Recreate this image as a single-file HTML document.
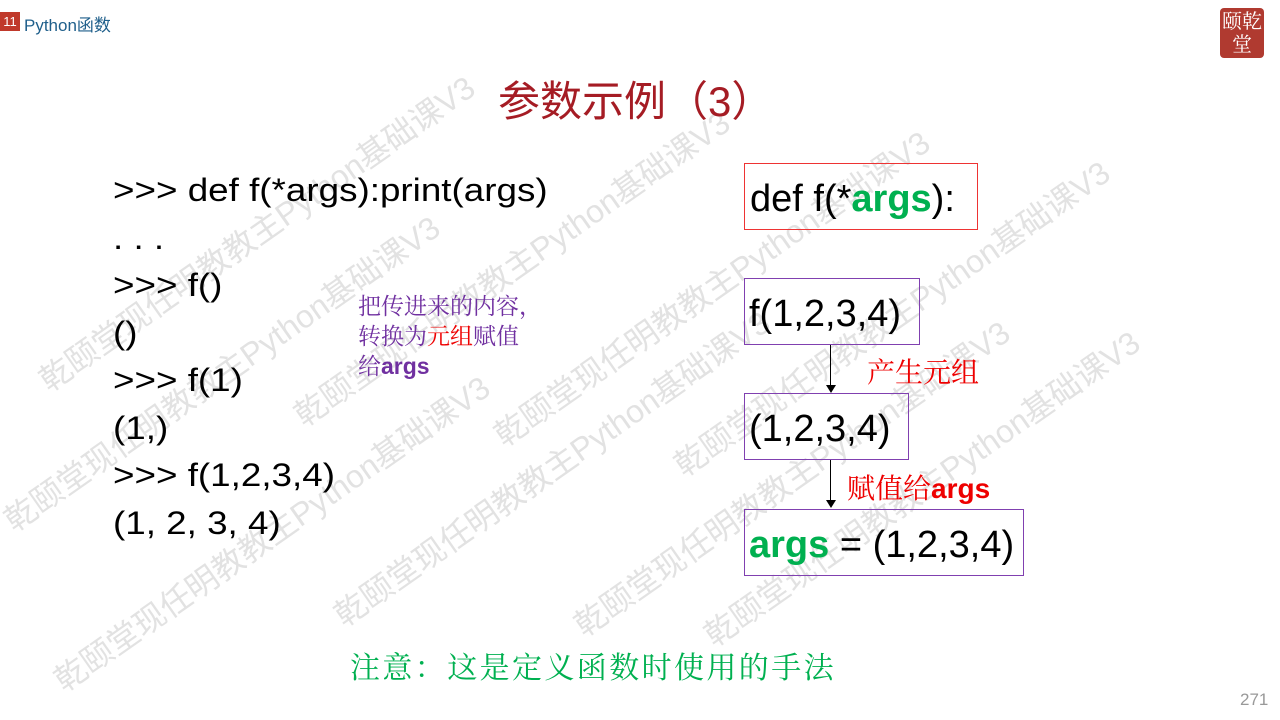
<!DOCTYPE html>
<html><head><meta charset="utf-8"><style>
body{margin:0;width:1280px;height:720px;background:#fff;position:relative;overflow:hidden;font-family:"Liberation Sans","Noto Sans CJK SC",sans-serif}
.a{position:absolute;white-space:nowrap}
.wm{position:absolute;white-space:nowrap;font-size:32px;color:rgba(190,190,190,0.45);transform-origin:0 100%;transform:rotate(-35deg);font-family:"Liberation Sans","Noto Sans CJK SC",sans-serif}
.code{font-size:32px;color:#000;line-height:47.5px;transform-origin:0 0;transform:scaleX(1.15)}
.box{position:absolute;box-sizing:border-box;font-size:38px;white-space:nowrap;line-height:1}
.g{color:#00b050;font-weight:bold}
</style></head><body>
<div class="wm" style="left:55px;top:355px">乾颐堂现任明教教主Python基础课V3</div>
<div class="wm" style="left:20px;top:495px">乾颐堂现任明教教主Python基础课V3</div>
<div class="wm" style="left:70px;top:655px">乾颐堂现任明教教主Python基础课V3</div>
<div class="wm" style="left:310px;top:390px">乾颐堂现任明教教主Python基础课V3</div>
<div class="wm" style="left:350px;top:590px">乾颐堂现任明教教主Python基础课V3</div>
<div class="wm" style="left:510px;top:410px">乾颐堂现任明教教主Python基础课V3</div>
<div class="wm" style="left:590px;top:600px">乾颐堂现任明教教主Python基础课V3</div>
<div class="wm" style="left:690px;top:440px">乾颐堂现任明教教主Python基础课V3</div>
<div class="wm" style="left:720px;top:610px">乾颐堂现任明教教主Python基础课V3</div>

<div class="a" style="left:0;top:12px;width:20px;height:19px;background:#c0392b;color:#fff;font-size:13px;text-align:center;line-height:19px">11</div>
<div class="a" style="left:24px;top:11px;font-size:17px;color:#1f5f8b">Python函数</div>
<div class="a" style="left:1220px;top:8px;width:44px;height:50px;background:#b03a30;border-radius:4px;color:#fff;font-size:20px;line-height:23px;text-align:center;font-family:'Noto Serif CJK SC',serif">颐乾<br>堂</div>

<div class="a" style="left:498px;top:68px;font-size:42px;color:#a51c24">参数示例（3）</div>

<div class="a code" style="left:113px;top:167px">&gt;&gt;&gt; def f(*args):print(args)<br>. . .<br>&gt;&gt;&gt; f()<br>()<br>&gt;&gt;&gt; f(1)<br>(1,)<br>&gt;&gt;&gt; f(1,2,3,4)<br>(1, 2, 3, 4)</div>

<div class="a" style="left:358px;top:290px;font-size:23px;line-height:30px;color:#7030a0;font-family:'Noto Serif CJK SC',serif">把传进来的内容，<br>转换为<span style="color:#e00">元组</span>赋值<br>给<b style="font-family:'Liberation Sans'">args</b></div>

<div class="box" style="left:744px;top:163px;width:234px;height:67px;border:1px solid #e33;padding:16px 0 0 5px">def f(*<span class="g">args</span>):</div>
<div class="box" style="left:744px;top:278px;width:176px;height:67px;border:1px solid #8040b0;padding:16px 0 0 4px">f(1,2,3,4)</div>
<div class="box" style="left:744px;top:393px;width:165px;height:67px;border:1px solid #8040b0;padding:16px 0 0 4px">(1,2,3,4)</div>
<div class="box" style="left:744px;top:509px;width:280px;height:67px;border:1px solid #8040b0;padding:16px 0 0 4px"><span class="g">args</span> = (1,2,3,4)</div>

<div class="a" style="left:830px;top:345px;width:1px;height:42px;background:#000"></div>
<div class="a" style="left:826px;top:385px;border-left:5px solid transparent;border-right:5px solid transparent;border-top:8px solid #000"></div>
<div class="a" style="left:830px;top:460px;width:1px;height:42px;background:#000"></div>
<div class="a" style="left:826px;top:500px;border-left:5px solid transparent;border-right:5px solid transparent;border-top:8px solid #000"></div>

<div class="a" style="left:867px;top:351px;font-size:28px;color:#e00;font-family:'Noto Serif CJK SC',serif">产生元组</div>
<div class="a" style="left:847px;top:467px;font-size:28px;color:#e00;font-family:'Noto Serif CJK SC',serif">赋值给<b style="font-family:'Liberation Sans'">args</b></div>

<div class="a" style="left:350px;top:643px;font-size:30px;letter-spacing:2.4px;color:#00b050;font-family:'Noto Serif CJK SC',serif">注意：这是定义函数时使用的手法</div>
<div class="a" style="left:1240px;top:690px;font-size:17px;color:#999">271</div>
</body></html>
